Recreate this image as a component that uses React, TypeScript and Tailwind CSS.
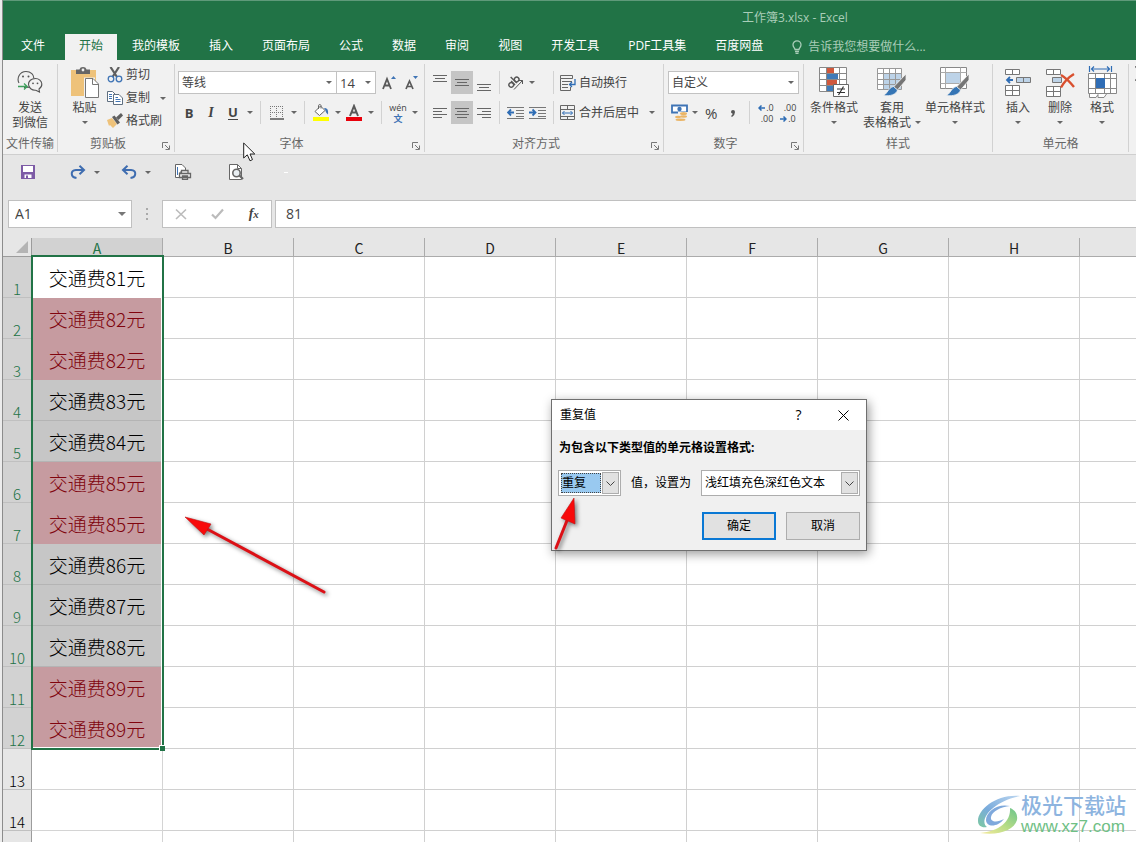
import React, { useState } from "react";

interface ChildrenProps {
  children: React.ReactNode;
}

const tabs = [
  "我的模板",
  "插入",
  "页面布局",
  "公式",
  "数据",
  "审阅",
  "视图",
  "开发工具",
  "PDF工具集",
  "百度网盘",
];

// the last column and row are only partly in view and carry no label
const columns = ["A", "B", "C", "D", "E", "F", "G", "H", ""];

const values = [81, 82, 82, 83, 84, 85, 85, 86, 87, 88, 89, 89];

const rows = Array.from({ length: 15 }, (_, i) => i + 1);

const isDuplicate = (value: number) =>
  values.filter((v) => v === value).length > 1;

const cellStyle = (row: number) => {
  const value = values[row - 1];
  if (value === undefined) return "bg-white";
  if (isDuplicate(value)) return "bg-[#c69ba0] text-[#80040e]";
  return row === 1 ? "bg-white text-black" : "bg-[#c6c6c6] text-black";
};

/* ---------- small parts ---------- */

const Caret = () => (
  <svg width="6" height="3" viewBox="0 0 6 3" className="shrink-0">
    <path d="M0 0H6L3 3Z" fill="#666" />
  </svg>
);

const Divider = () => <div className="mx-[5px] h-[23px] w-px bg-[#d2d2d2]" />;

const CaretButton = ({ label }: { label: string }) => (
  <button aria-label={label} className="flex h-[23px] w-[11px] items-center justify-center">
    <Caret />
  </button>
);

interface ToolProps extends ChildrenProps {
  label: string;
  active?: boolean;
}

const Tool: React.FC<ToolProps> = ({ label, active, children }) => (
  <button
    aria-label={label}
    className={`flex h-[23px] w-[22px] shrink-0 items-center justify-center ${
      active ? "bg-[#c5c5c5]" : ""
    }`}
  >
    {children}
  </button>
);

interface GroupProps extends ChildrenProps {
  title: string;
  width: string;
  launcher?: boolean;
}

const Group: React.FC<GroupProps> = ({ title, width, launcher, children }) => (
  <section className={`flex shrink-0 flex-col border-r border-[#d2d2d2] ${width}`}>
    <div className="h-[72px]">{children}</div>
    <div className="flex h-4 items-center">
      <h2 className="flex-1 text-center leading-4 whitespace-nowrap text-[#666]">{title}</h2>
      {launcher && (
        <button aria-label={`${title}设置`} className="flex w-4 justify-center pt-1">
          <svg width="8" height="8" viewBox="0 0 8 8" fill="none" stroke="#777">
            <path d="M.5 6V.5H6M3 3L7 7M7.5 3.5V7.5H3.5" />
          </svg>
        </button>
      )}
    </div>
  </section>
);

interface BigButtonProps {
  icon: React.ReactNode;
  lines: string[];
  width: string;
  caret?: "below" | "inline";
}

const BigButton: React.FC<BigButtonProps> = ({ icon, lines, width, caret }) => (
  <button
    className={`flex shrink-0 flex-col items-center pt-0.5 leading-[15px] whitespace-nowrap ${width}`}
  >
    <span className="mb-0.5 flex h-8 items-center justify-center">{icon}</span>
    {lines.map((line, i) => (
      <span key={line} className="flex items-center gap-1">
        {line}
        {caret === "inline" && i === lines.length - 1 && <Caret />}
      </span>
    ))}
    {caret === "below" && (
      <span className="flex h-[15px] items-center">
        <Caret />
      </span>
    )}
  </button>
);

/* ---------- icons ---------- */

const WechatIcon = () => (
  <svg width="26" height="24" viewBox="0 0 26 24" fill="none" stroke="#555" strokeWidth="1.1">
    <path d="M2 13C-.5 8.5 2.5 1.5 9 1.5C14 1.5 17 5 16.7 8.3" />
    <path d="M7 17.5L12.5 17.2" />
    <path d="M18.5 8.5C14 8.5 11.5 11.3 11.5 14.3C11.5 18 15 20.5 18.8 20.2L22.5 22L22 19C24.3 17.5 25 15.8 24.8 13.8C24.5 11 22 8.5 18.5 8.5Z" />
    <path d="M1 16.5H10M7 13.5L10.2 16.5L7 19.5" stroke="#3ea05c" strokeWidth="1.3" />
    <circle cx="6" cy="6.5" r="1" fill="#555" stroke="none" />
    <circle cx="11.5" cy="6.5" r="1" fill="#555" stroke="none" />
    <circle cx="16" cy="13.3" r=".9" fill="#555" stroke="none" />
    <circle cx="20.5" cy="13.3" r=".9" fill="#555" stroke="none" />
  </svg>
);

const PasteIcon = () => (
  <svg width="28" height="31" viewBox="0 0 28 31">
    <path d="M0 3H25V29H0Z" fill="#eec27a" />
    <path d="M5 2.5H8.5C9 .8 10 0 12 0S15 .8 15.5 2.5H19V7H5Z" fill="#666" />
    <circle cx="12" cy="3" r="1.4" fill="#f1f1f1" />
    <path d="M13 10.5H24V31H13Z" fill="#f1f1f1" />
    <path d="M14.5 11.5H22L27.5 17V30.5H14.5Z" fill="#fff" stroke="#777" />
    <path d="M21.5 11.5V17.5H27.5" fill="none" stroke="#777" />
  </svg>
);

const CutIcon = () => (
  <svg width="16" height="16" viewBox="0 0 16 16" fill="none">
    <path d="M3.5 0L10 10M12 0L5.5 10" stroke="#5f5f5f" strokeWidth="2.2" />
    <circle cx="4" cy="12" r="2.8" stroke="#3f74b5" strokeWidth="1.3" />
    <circle cx="12" cy="12" r="2.8" stroke="#3f74b5" strokeWidth="1.3" />
  </svg>
);

const CopyIcon = () => (
  <svg width="16" height="16" viewBox="0 0 16 16" fill="#fff" stroke="#5f6f80">
    <path d="M.5 1.5H5.5L8.5 4.500V11.5H.5Z" />
    <path d="M6.5 4.500H12L15.5 8V14.5H6.5Z" />
    <path d="M2 4.500H5M2 6.500H5M2 8.500H5M8.500 7.500H11M8.500 9.500H13.500M8.500 11.500H13.500" stroke="#3f74b5" />
  </svg>
);

const BrushIcon = () => (
  <svg width="16" height="16" viewBox="0 0 16 16">
    <path d="M0 7L5 5L10 11L6 15L3 12L2 13Z" fill="#eec27a" />
    <path d="M5 4L7.5 2.5L13 9.5L10.5 11.5Z" fill="#5f5f5f" />
    <path d="M9 4.500L14 0L16 2.500L11.500 7Z" fill="#5f5f5f" />
  </svg>
);

const BordersIcon = () => (
  <svg width="14" height="14" viewBox="0 0 14 14" fill="none" stroke="#777">
    <path d="M0 .5H14M0 6.5H14M.5 0V12M6.5 0V12M12.500 0V12" strokeDasharray="1 1" />
    <path d="M0 13H14" stroke="#555" strokeWidth="1.5" />
  </svg>
);

const FillIcon = () => (
  <svg width="16" height="17" viewBox="0 0 16 17">
    <path d="M2 7.500L7.500 2L12 6.500L6.500 11.500Z" fill="#fff" stroke="#666" />
    <path d="M5.500 5V1.500C5.500 .3 8 .3 8 1.500V4.500" fill="none" stroke="#666" />
    <path d="M11 4C14.500 4 15.500 6 15 10.500C13.500 9 12.500 8 12.300 6Z" fill="#3f74b5" />
    <path d="M0 13H16V17H0Z" fill="#ff0" />
  </svg>
);

const FontColorIcon = () => (
  <svg width="16" height="17" viewBox="0 0 16 17">
    <path d="M4 12L8 2L12 12M5.500 8.500H10.500" fill="none" stroke="#595959" strokeWidth="2" />
    <path d="M0 13H16V17H0Z" fill="#e8000b" />
  </svg>
);

const alignPaths = {
  top: "M0 .5H14M2 3.500H12M0 6.500H14",
  middle: "M0 4.500H14M2 7.500H12M0 10.500H14",
  bottom: "M0 9.500H14M2 12.500H12M0 15.500H14",
  left: "M0 3.500H14M0 6.500H9M0 9.500H14M0 12.500H9",
  center: "M0 3.500H14M2 6.500H12M0 9.500H14M2 12.500H12",
  right: "M0 3.500H14M5 6.500H14M0 9.500H14M5 12.500H14",
};

const AlignIcon = ({ kind }: { kind: keyof typeof alignPaths }) => (
  <svg width="14" height="16" viewBox="0 0 14 16" fill="none" stroke="#666">
    <path d={alignPaths[kind]} />
  </svg>
);

const OrientationIcon = () => (
  <svg width="17" height="16" viewBox="0 0 17 16" fill="none" stroke="#555">
    <g transform="rotate(-45 6 6)" strokeWidth="1.4">
      <circle cx="2" cy="7.500" r="2.300" />
      <path d="M4.700 4.700V10.200M7.200 1.500V10.200" />
      <circle cx="9.700" cy="7.500" r="2.300" />
    </g>
    <path d="M7 14.500L15.500 5.500M12 5.500H15.500V9" />
  </svg>
);

const IndentIcon = ({ decrease }: { decrease?: boolean }) => (
  <svg width="17" height="14" viewBox="0 0 17 14" fill="none">
    <path d="M0 1.500H17M9 4.500H17M9 7.500H17M9 10.500H17M0 12.500H17" stroke="#777" />
    <path
      d={decrease ? "M7 6.500H1.500M4 3.500L1 6.500L4 9.500" : "M0 6.500H5.500M3.500 3.500L6.500 6.500L3.500 9.500"}
      stroke="#2f6db5"
      strokeWidth="1.8"
    />
  </svg>
);

const WrapIcon = () => (
  <svg width="16" height="16" viewBox="0 0 16 16" fill="none" stroke="#666">
    <path d="M.5 .5H12.500V3.500H.5ZM.5 3.500V15.500H10.500V12M2 6.500H12M2 9.500H8M2 12.500H8" />
    <path d="M15 4V9.500H10M12 7L9.500 9.500L12 12" stroke="#2f6db5" strokeWidth="1.3" />
  </svg>
);

const MergeIcon = () => (
  <svg width="16" height="16" viewBox="0 0 16 16" fill="none" stroke="#666">
    <path d="M.5 .5H14.500V14.500H.5ZM.5 4.500H14.500M.5 11.500H14.500M7.500 .5V4.500M7.500 11.500V14.500" />
    <path d="M2.500 8H12.500M4.500 6L2.500 8L4.500 10M10.500 6L12.500 8L10.500 10" stroke="#2f6db5" />
  </svg>
);

const MoneyIcon = () => (
  <svg width="17" height="17" viewBox="0 0 17 17">
    <path d="M1 1.500H16V8.500H1Z" fill="#fff" stroke="#3f74b5" strokeWidth="1.8" />
    <circle cx="8.500" cy="5" r="2.200" fill="#3f74b5" />
    <path d="M7 8H17V17H4V12H7Z" fill="#f1f1f1" />
    <ellipse cx="12.500" cy="9.500" rx="3.500" ry="1.500" fill="#eab567" />
    <ellipse cx="12.500" cy="12.500" rx="3.500" ry="1.200" fill="#eab567" />
    <ellipse cx="7" cy="13" rx="3" ry="1.200" fill="#eab567" />
    <ellipse cx="9.500" cy="15.700" rx="5" ry="1.200" fill="#eab567" />
  </svg>
);

const DecimalIcon = ({ increase }: { increase?: boolean }) => (
  <span className="relative flex flex-col text-[9px] leading-[11px] text-[#444]">
    <span className={increase ? "pl-2" : "pl-1"}>{increase ? ".0" : ".00"}</span>
    <span className={increase ? "pl-[2px]" : "pl-2"}>{increase ? ".00" : ".0"}</span>
    <svg
      width="7"
      height="6"
      viewBox="0 0 7 6"
      fill="none"
      stroke="#2f6db5"
      strokeWidth="1.5"
      className={increase ? "absolute top-[3px] left-0" : "absolute bottom-0.5 left-0"}
    >
      <path d={increase ? "M7 3H1M3.500 .5L1 3L3.500 5.500" : "M0 3H6M3.500 .5L6 3L3.500 5.500"} />
    </svg>
  </span>
);

const ConditionalIcon = () => (
  <svg width="30" height="30" viewBox="0 0 30 30">
    <path d="M.5 .5H27.500V24.500H.5Z" fill="#fff" />
    <path d="M8 1H15V6H8ZM8 13H18V18H8Z" fill="#d0583c" />
    <path d="M8 7H19V12H8ZM8 19H14V24H8Z" fill="#3f7ab8" />
    <path d="M.5 .5H27.500V24.500H.5ZM7.500 .5V24.500M20.500 .5V24.500M.5 6.500H27.500M.5 12.500H27.500M.5 18.500H27.500" fill="none" stroke="#888" />
    <path d="M14.500 17.500H29.500V29.500H14.500Z" fill="#fff" stroke="#666" />
    <path d="M18 22H26M18 25.500H26M24.500 19.500L19.500 28" fill="none" stroke="#333" strokeWidth="1.2" />
  </svg>
);

const StyleBrush = () => (
  <>
    <path d="M29 7V13L20.500 23L16.500 20Z" fill="#757575" stroke="#f1f1f1" strokeWidth=".8" />
    <path d="M16.500 19.500L20.500 23C19.500 27.500 13 29.500 6.500 28.500C10.500 26.500 11.500 20.500 16.500 19.500Z" fill="#3575b5" stroke="#f1f1f1" strokeWidth=".8" />
  </>
);

const TableFormatIcon = () => (
  <svg width="30" height="30" viewBox="0 0 30 30">
    <path d="M.5 1.500H24.500V22.500H.5Z" fill="#fff" />
    <path d="M7 7H24V22H7Z" fill="#bdd3e8" />
    <path d="M.5 1.500H24.500V22.500H.5ZM6.500 1.500V22.500M12.500 1.500V22.500M18.500 1.500V22.500M.5 6.500H24.500M.5 12.500H24.500M.5 17.500H24.500" fill="none" stroke="#999" />
    <StyleBrush />
  </svg>
);

const CellStyleIcon = () => (
  <svg width="30" height="30" viewBox="0 0 30 30">
    <path d="M.5 .5H26.500V21.500H.5Z" fill="#fff" stroke="#888" />
    <path d="M5.500 .5V21.500M20.500 .5V21.500M.5 5.500H26.500M.5 16.500H26.500" fill="none" stroke="#aaa" />
    <path d="M6 6H20V16H6Z" fill="#bdd3e8" />
    <StyleBrush />
  </svg>
);

const InsertIcon = () => (
  <svg width="27" height="29" viewBox="0 0 27 29" fill="#fff" stroke="#777">
    <path d="M.5 1.500H14.500V6.500H.5ZM7.500 1.500V6.500M.5 17.500H14.500V27.500H.5ZM7.500 17.500V27.500M.5 22.500H14.500" />
    <path d="M11.500 9.500H25.500V14.500H11.500ZM18.500 9.500V14.500" fill="#bdd3e8" />
    <path d="M8 12H2M5 9L2 12L5 15" fill="none" stroke="#2f6db5" strokeWidth="1.8" />
  </svg>
);

const DeleteIcon = () => (
  <svg width="29" height="29" viewBox="0 0 29 29" fill="#fff" stroke="#777">
    <path d="M.5 1.500H14.500V6.500H.5ZM7.500 1.500V6.500M.5 18.500H14.500V28.500H.5ZM7.500 18.500V28.500M.5 23.500H14.500" />
    <path d="M6.500 9.500H15.500V14.500H6.500Z" fill="#bdd3e8" />
    <path d="M15 7C20 10 24 14 28 19M28 6C23 9 18 14 15 19.500" fill="none" stroke="#d9502f" strokeWidth="2.4" />
  </svg>
);

const FormatIcon = () => (
  <svg width="29" height="32" viewBox="0 0 29 32" fill="#fff" stroke="#888">
    <path d="M1.500 0V6M23.500 0V6M3 3H22M6 .5L3.500 3L6 5.500M19 .5L21.500 3L19 5.500" fill="none" stroke="#2f6db5" strokeWidth="1.2" />
    <path d="M.5 7.500H28.500V27.500H.5ZM.5 12.500H28.500M.5 22.500H28.500M7.500 7.500V27.500M16.500 7.500V27.500M22.500 7.500V27.500" />
    <path d="M8 12H17V22H8Z" fill="#2f6db5" stroke="none" />
    <path d="M1.500 28V31.500H8L10 28.500V31.500H16L18.500 28" />
  </svg>
);

const SaveIcon = () => (
  <svg width="14" height="14" viewBox="0 0 14 14">
    <path d="M0 0H14V14H0Z" fill="#7d5ba6" />
    <path d="M2 1H12V7H2ZM3.500 9.500H10.500V13H3.500Z" fill="#fff" />
    <path d="M5 10.500H7V13H5Z" fill="#7d5ba6" />
  </svg>
);

const UndoIcon = ({ redo }: { redo?: boolean }) => (
  <svg width="16" height="14" viewBox="0 0 16 14" fill="none" stroke="#3f6db0" strokeWidth="2">
    {redo ? (
      <path d="M14 5H6C0 5.500 .5 12 6.500 13M9.500 .8L14 5L9.500 9.200" />
    ) : (
      <path d="M2 5H10C16 5.500 15.500 12 9.500 13M6.500 .8L2 5L6.500 9.200" />
    )}
  </svg>
);

const PrintIcon = () => (
  <svg width="17" height="16" viewBox="0 0 17 16" fill="none" stroke="#666">
    <path d="M.5 .5H7L10.500 4V8H5V13.500H.5Z" fill="#fff" />
    <path d="M2.500 3V11" stroke="#3f74b5" />
    <path d="M6.500 9V6.500H13V9M4.500 9.500H15.500V13.500H4.500ZM7.500 12H12.500V15.500H7.500Z" strokeWidth="1.3" fill="#eee" />
  </svg>
);

const PreviewIcon = () => (
  <svg width="15" height="16" viewBox="0 0 15 16" fill="none" stroke="#666">
    <path d="M.5 .5H8.500L12.500 4.500V15.500H.5Z" fill="#fff" />
    <path d="M8.500 .5V4.500H12.500" />
    <circle cx="7.500" cy="9" r="3.700" strokeWidth="1.6" fill="#e8eef2" />
    <path d="M10.500 11.500L14 15" strokeWidth="2.2" />
  </svg>
);

const ChevronBox = () => (
  <span className="pointer-events-none flex w-[17px] items-center justify-center border border-[#adadad] bg-[#e1e1e1]">
    <svg width="9" height="5" viewBox="0 0 9 5" fill="none" stroke="#444">
      <path d="M.5 .5L4.500 4.500L8.500 .5" />
    </svg>
  </span>
);

interface RedArrowProps {
  className: string;
  width: number;
  height: number;
  shaft: string;
  head: string;
}

const RedArrow: React.FC<RedArrowProps> = ({ className, width, height, shaft, head }) => (
  <svg
    width={width}
    height={height}
    viewBox={`0 0 ${width} ${height}`}
    className={`pointer-events-none absolute z-20 overflow-visible drop-shadow-[2px_2px_2px_rgba(0,0,0,0.5)] ${className}`}
  >
    <path d={shaft} stroke="#dc1016" strokeWidth="3" strokeLinecap="round" />
    <path d={head} fill="#f80a0a" stroke="#c01014" strokeWidth=".6" />
  </svg>
);

/* ---------- ribbon ---------- */

interface RibbonSelectProps {
  label: string;
  value: string;
  className: string;
}

const RibbonSelect: React.FC<RibbonSelectProps> = ({ label, value, className }) => (
  <div className={`relative h-[23px] border border-[#c2c2c2] bg-white ${className}`}>
    <select
      aria-label={label}
      defaultValue={value}
      className="block h-full w-full appearance-none bg-transparent pl-[3px] outline-none"
    >
      <option>{value}</option>
    </select>
    <span className="pointer-events-none absolute inset-y-0 right-1 flex items-center">
      <Caret />
    </span>
  </div>
);

const Ribbon = () => (
  <div className="flex overflow-hidden border-b border-[#cfcfcf] bg-[#f1f1f1] pt-1 pb-0.5 text-[#444]">
    <Group title="文件传输" width="w-[55px]">
      <BigButton icon={<WechatIcon />} lines={["发送", "到微信"]} width="w-full" />
    </Group>

    <Group title="剪贴板" width="w-[117px]" launcher>
      <div className="flex">
        <BigButton icon={<PasteIcon />} lines={["粘贴"]} width="w-[49px] pl-1" caret="below" />
        <div className="flex flex-col gap-px">
          <button className="flex h-[22px] items-center gap-[3px]">
            <CutIcon />
            剪切
          </button>
          <div className="flex h-[22px] items-center gap-[7px]">
            <button className="flex items-center gap-[3px]">
              <CopyIcon />
              复制
            </button>
            <CaretButton label="复制选项" />
          </div>
          <button className="flex h-[22px] items-center gap-[3px]">
            <BrushIcon />
            格式刷
          </button>
        </div>
      </div>
    </Group>

    <Group title="字体" width="w-[250px]" launcher>
      <div className="flex flex-col gap-[7px] pt-[7px] pl-[3px]">
        <div className="flex">
          <RibbonSelect label="字体" value="等线" className="w-[159px]" />
          <RibbonSelect label="字号" value="14" className="-ml-px w-10 text-[13px]" />
          <div className="flex pl-0.5">
            <Tool label="增大字号">
              <svg width="14" height="16" viewBox="0 0 14 16" fill="none">
                <path d="M1 14L5 4L9 14M2.500 10.500H7.500" stroke="#595959" strokeWidth="1.8" />
                <path d="M9 4L11.500 1L14 4Z" fill="#3f74b5" />
              </svg>
            </Tool>
            <Tool label="减小字号">
              <svg width="14" height="16" viewBox="0 0 14 16" fill="none">
                <path d="M2 14L5.500 6L9 14M3.500 11.500H7.500" stroke="#595959" strokeWidth="1.7" />
                <path d="M9 1H14L11.500 4Z" fill="#3f74b5" />
              </svg>
            </Tool>
          </div>
        </div>
        <div className="flex items-center">
          <Tool label="加粗">
            <b className="text-[13px]">B</b>
          </Tool>
          <Tool label="倾斜">
            <i className="font-['Liberation_Serif',serif] text-sm font-bold">I</i>
          </Tool>
          <Tool label="下划线">
            <b className="border-b border-[#444] text-[13px] leading-[13px]">U</b>
          </Tool>
          <CaretButton label="下划线选项" />
          <Divider />
          <Tool label="边框">
            <BordersIcon />
          </Tool>
          <CaretButton label="边框选项" />
          <Divider />
          <Tool label="填充颜色">
            <FillIcon />
          </Tool>
          <CaretButton label="填充颜色选项" />
          <Tool label="字体颜色">
            <FontColorIcon />
          </Tool>
          <CaretButton label="字体颜色选项" />
          <Divider />
          <Tool label="拼音">
            <span className="flex flex-col items-center text-[9px] leading-[11px]">
              <span>wén</span>
              <span className="font-bold text-[#3f74b5]">文</span>
            </span>
          </Tool>
          <CaretButton label="拼音选项" />
        </div>
      </div>
    </Group>

    <Group title="对齐方式" width="w-[239px]" launcher>
      <div className="flex flex-col gap-[7px] pt-[7px] pl-1">
        <div className="flex items-center">
          <Tool label="顶端对齐">
            <AlignIcon kind="top" />
          </Tool>
          <Tool label="垂直居中" active>
            <AlignIcon kind="middle" />
          </Tool>
          <Tool label="底端对齐">
            <AlignIcon kind="bottom" />
          </Tool>
          <div className="mx-1 h-[23px] w-px bg-[#d2d2d2]" />
          <div className="flex w-11">
            <Tool label="方向">
              <OrientationIcon />
            </Tool>
            <CaretButton label="方向选项" />
          </div>
          <Divider />
          <button className="flex items-center gap-[3px] pl-px">
            <WrapIcon />
            自动换行
          </button>
        </div>
        <div className="flex items-center">
          <Tool label="左对齐">
            <AlignIcon kind="left" />
          </Tool>
          <Tool label="居中" active>
            <AlignIcon kind="center" />
          </Tool>
          <Tool label="右对齐">
            <AlignIcon kind="right" />
          </Tool>
          <div className="mx-1 h-[23px] w-px bg-[#d2d2d2]" />
          <Tool label="减少缩进量">
            <IndentIcon decrease />
          </Tool>
          <Tool label="增加缩进量">
            <IndentIcon />
          </Tool>
          <Divider />
          <button className="mr-[7px] flex items-center gap-[3px] pl-px whitespace-nowrap">
            <MergeIcon />
            合并后居中
          </button>
          <CaretButton label="合并选项" />
        </div>
      </div>
    </Group>

    <Group title="数字" width="w-[140px]" launcher>
      <div className="flex flex-col gap-[7px] px-1 pt-[7px]">
        <RibbonSelect label="数字格式" value="自定义" className="w-full" />
        <div className="flex items-center">
          <Tool label="会计数字格式">
            <MoneyIcon />
          </Tool>
          <CaretButton label="会计数字格式选项" />
          <Tool label="百分比样式">
            <span className="text-[15px]">%</span>
          </Tool>
          <Tool label="千位分隔样式">
            <svg width="6" height="8" viewBox="0 0 6 8">
              <path d="M1 3A2 2 0 1 1 5 3Q5 6 2 8L1 7Q3 5.500 2.500 4.500Q1 4 1 3Z" fill="#555" />
            </svg>
          </Tool>
          <Divider />
          <Tool label="增加小数位数">
            <DecimalIcon increase />
          </Tool>
          <Tool label="减少小数位数">
            <DecimalIcon />
          </Tool>
        </div>
      </div>
    </Group>

    <Group title="样式" width="w-[189px]">
      <div className="flex px-1">
        <BigButton icon={<ConditionalIcon />} lines={["条件格式"]} width="w-[52px]" caret="below" />
        <BigButton
          icon={<TableFormatIcon />}
          lines={["套用", "表格格式"]}
          width="w-16"
          caret="inline"
        />
        <BigButton icon={<CellStyleIcon />} lines={["单元格样式"]} width="w-[62px]" caret="below" />
      </div>
    </Group>

    <Group title="单元格" width="w-[136px]">
      <div className="flex px-1">
        <BigButton icon={<InsertIcon />} lines={["插入"]} width="w-[42px]" caret="below" />
        <BigButton icon={<DeleteIcon />} lines={["删除"]} width="w-[42px]" caret="below" />
        <BigButton icon={<FormatIcon />} lines={["格式"]} width="w-[42px]" caret="below" />
      </div>
    </Group>

    <button aria-label="自动求和" className="ml-1.5 shrink-0 self-start pt-0.5">
      <svg width="12" height="15" viewBox="0 0 12 15" fill="none" stroke="#555" strokeWidth="1.5">
        <path d="M11 3V1H1L6 7.500L1 14H11V12" />
      </svg>
    </button>
  </div>
);

/* ---------- sheet ---------- */

const Sheet = () => (
  <div className="relative min-h-0 flex-1 overflow-hidden bg-white">
    <table className="w-max table-fixed border-separate border-spacing-0 font-['Noto_Sans_CJK_SC',sans-serif]">
      <thead>
        <tr className="h-[19px] text-sm leading-4">
          <th className="w-[29px] border-r border-b border-[#9c9c9c] bg-[#e6e6e6] p-0">
            <svg width="12" height="12" viewBox="0 0 12 12" className="ml-auto mr-[3px]">
              <path d="M12 0V12H0Z" fill="#b4b4b4" />
            </svg>
          </th>
          {columns.map((column) => (
            <th
              key={column}
              scope="col"
              className={`w-[131px] border-r border-b border-[#ababab] p-0 pt-0.5 font-normal ${
                column === "A" ? "bg-[#d2d2d2] text-[#217346]" : "bg-[#e6e6e6] text-[#222]"
              }`}
            >
              {column}
            </th>
          ))}
        </tr>
      </thead>
      <tbody>
        {rows.map((row) => (
          <tr key={row} className="h-[41px]">
            <th
              scope="row"
              className={`border-r border-b border-r-[#9c9c9c] border-b-[#c0c0c0] p-0 align-bottom text-[15px] leading-4 font-light ${
                row <= values.length ? "bg-[#d2d2d2] text-[#217346]" : "bg-[#e6e6e6] text-black"
              }`}
            >
              {row < rows.length && row}
            </th>
            {columns.map((column) =>
              column === "A" ? (
                <td
                  key={column}
                  className={`border-r border-b p-0 pt-0.5 text-center text-[19px] leading-6 font-light ${cellStyle(row)} ${
                    row > values.length
                      ? "border-[#d4d4d4]"
                      : isDuplicate(values[row - 1])
                        ? "border-[#c69ba0]"
                        : row === 1
                          ? "border-white"
                          : "border-[#b4b4b4]"
                  }`}
                >
                  {row <= values.length && `交通费${values[row - 1]}元`}
                </td>
              ) : (
                <td key={column} className="border-r border-b border-[#d0d0d0] p-0" />
              )
            )}
          </tr>
        ))}
      </tbody>
    </table>
    {/* selection frame around A1:A12 */}
    <div className="pointer-events-none absolute top-[17px] left-7 h-[495px] w-[133px] border-2 border-[#217346]">
      <div className="h-full border-r border-b border-white" />
      <span className="absolute -right-[3px] -bottom-[3px] h-[6px] w-[6px] border-t border-l border-white bg-[#217346]" />
    </div>
  </div>
);

/* ---------- dialog ---------- */

const DuplicateDialog = ({ onClose }: { onClose: () => void }) => (
  <div
    role="dialog"
    aria-labelledby="dialog-title"
    className="absolute top-[399px] left-[551px] z-10 w-[316px] border border-[#6f6f6f] bg-[#f0f0f0] pb-2.5 text-black shadow-[2px_3px_10px_rgba(0,0,0,0.4)]"
  >
    <div className="flex h-[30px] items-center bg-white pl-2">
      <h2 id="dialog-title" className="flex-1">
        重复值
      </h2>
      <button aria-label="帮助" className="w-[45px] text-center text-sm">
        ?
      </button>
      <button aria-label="关闭" onClick={onClose} className="flex w-[45px] justify-center">
        <svg width="11" height="11" viewBox="0 0 11 11" stroke="#000">
          <path d="M.5 .5L10.500 10.500M10.500 .5L.5 10.500" />
        </svg>
      </button>
    </div>
    <p className="px-[7px] pt-2 leading-5 font-bold">为包含以下类型值的单元格设置格式:</p>
    <div className="flex items-center px-[6px] pt-3">
      <div className="flex h-[26px] w-[63px] border border-[#adadad] bg-white p-px">
        <select
          id="kind"
          aria-label="类型"
          defaultValue="重复"
          className="m-px min-w-0 flex-1 appearance-none border border-dotted border-[#444] bg-[#99c9f0] outline-none"
        >
          <option>重复</option>
          <option>唯一</option>
        </select>
        <ChevronBox />
      </div>
      <label htmlFor="format" className="px-2.5 whitespace-nowrap">
        值，设置为
      </label>
      <div className="flex h-[26px] min-w-0 flex-1 border border-[#adadad] bg-white p-px">
        <select
          id="format"
          defaultValue="浅红填充色深红色文本"
          className="min-w-0 flex-1 appearance-none bg-transparent pl-0.5 outline-none"
        >
          <option>浅红填充色深红色文本</option>
        </select>
        <ChevronBox />
      </div>
    </div>
    <div className="flex justify-end gap-2.5 px-[6px] pt-4">
      <button onClick={onClose} className="h-7 w-[74px] border-2 border-[#0a78d4] bg-[#e1e1e1]">
        确定
      </button>
      <button onClick={onClose} className="h-7 w-[74px] border border-[#adadad] bg-[#e1e1e1]">
        取消
      </button>
    </div>
  </div>
);

const Watermark = () => (
  <a
    href="#xz7"
    className="absolute right-2.5 bottom-1.5 z-10 flex items-center gap-px font-['Liberation_Sans','Noto_Sans_CJK_SC',sans-serif]"
  >
    <svg width="43" height="42" viewBox="0 0 43 42">
      <defs>
        <linearGradient id="wave" x1="0" y1="1" x2="1" y2="0">
          <stop offset="0" stopColor="#7cc9a0" />
          <stop offset=".4" stopColor="#79abdc" />
          <stop offset="1" stopColor="#bcd6f0" />
        </linearGradient>
        <linearGradient id="leaf" x1="0" y1="1" x2="1" y2="0">
          <stop offset="0" stopColor="#f6ea9c" />
          <stop offset=".5" stopColor="#b5dc86" />
          <stop offset="1" stopColor="#6cc48c" />
        </linearGradient>
      </defs>
      <path d="M43 2C20 0 1 15 1 27C1 32 5 34 10 33C1 26 16 7 43 2Z" fill="url(#wave)" />
      <path d="M33 12C20 9 9 18 9 26C9 33 20 34 27 25C20 29 13 28 14 23C15 17 24 13 33 12Z" fill="#7fa9dc" />
      <path d="M33 14C38 16 41 20 40 26C37 36 22 42 3 39C22 37 34 28 33 14Z" fill="url(#leaf)" />
    </svg>
    <span className="flex flex-col">
      <span className="text-[21px] leading-[24px] font-medium text-[#8db4df]">极光下载站</span>
      <span className="text-[17px] leading-[18px] text-[#6fc085]">www.xz7.com</span>
    </span>
  </a>
);

export default function App() {
  const [open, setOpen] = useState<boolean>(true);

  return (
    <div className="relative flex h-screen overflow-hidden bg-[#ececec] font-['Open_Sans','Noto_Sans_CJK_SC',sans-serif] text-xs leading-4">
      <div className="w-[3px] shrink-0 border-r border-[#8c8c8c]" />
      <div className="flex min-w-0 flex-1 flex-col bg-[#e6e6e6]">
        <header className="border-t border-[#5f9a7a] bg-[#217346] text-white">
          <h1 className="flex h-[33px] items-center pl-[739px] whitespace-nowrap text-[#a9cdb8]">
            工作簿3.xlsx - Excel
          </h1>
          <nav className="flex h-[26px] items-stretch gap-px whitespace-nowrap">
            <button className="mr-px px-[18px] pb-0.5">文件</button>
            <button className="bg-[#f1f1f1] px-[14px] pb-0.5 text-[#217346]">开始</button>
            {tabs.map((tab) => (
              <button key={tab} className="px-[14px] pb-0.5">
                {tab}
              </button>
            ))}
            <button className="flex items-center gap-1.5 px-[14px] text-[#a9cdb8]">
              <svg width="10" height="14" viewBox="0 0 10 14" fill="none" stroke="#a9cdb8" strokeWidth="1.3">
                <path d="M3 9.500C3 8 1 7.500 1 4.800C1 2.500 2.800 .8 5 .8S9 2.500 9 4.800C9 7.500 7 8 7 9.500ZM3 11.500H7M3.500 13.300H6.500" />
              </svg>
              告诉我您想要做什么...
            </button>
          </nav>
        </header>

        <Ribbon />

        <div className="flex h-[34px] items-center pl-[18px]">
          <button aria-label="保存">
            <SaveIcon />
          </button>
          <button aria-label="恢复" className="ml-[35px]">
            <UndoIcon redo />
          </button>
          <div className="ml-[5px]">
            <CaretButton label="恢复选项" />
          </div>
          <button aria-label="撤消" className="ml-[19px]">
            <UndoIcon />
          </button>
          <div className="ml-[5px]">
            <CaretButton label="撤消选项" />
          </div>
          <button aria-label="快速打印" className="ml-[22px]">
            <PrintIcon />
          </button>
          <button aria-label="打印预览" className="ml-[37px]">
            <PreviewIcon />
          </button>
          <div className="ml-10 h-px w-1 bg-white" />
        </div>

        <div className="mt-[11px] mb-2.5 flex h-7 text-sm text-[#444]">
          <div className="relative ml-[5px] w-[124px] border border-[#c0c0c0] bg-white">
            <select aria-label="名称框" className="h-full w-full appearance-none pl-1.5 outline-none">
              <option>A1</option>
            </select>
            <span className="pointer-events-none absolute inset-y-0 right-[5px] flex items-center">
              <svg width="8" height="4" viewBox="0 0 8 4">
                <path d="M0 0H8L4 4Z" fill="#777" />
              </svg>
            </span>
          </div>
          <div className="flex w-[30px] flex-col items-center justify-center gap-[3px]">
            <span className="h-0.5 w-0.5 bg-[#aaa]" />
            <span className="h-0.5 w-0.5 bg-[#aaa]" />
            <span className="h-0.5 w-0.5 bg-[#aaa]" />
          </div>
          <div className="flex w-[110px] items-center justify-around border border-[#c0c0c0] bg-white">
            <button aria-label="取消输入">
              <svg width="12" height="12" viewBox="0 0 12 12" stroke="#bbb" strokeWidth="1.6">
                <path d="M1 1.500L11 11M11 1.500L1 11" />
              </svg>
            </button>
            <button aria-label="输入">
              <svg width="13" height="12" viewBox="0 0 13 12" fill="none" stroke="#bbb" strokeWidth="2.2">
                <path d="M1 6.500L4.500 10L12 1.500" />
              </svg>
            </button>
            <button
              aria-label="插入函数"
              className="font-['Liberation_Serif',serif] font-bold italic"
            >
              f<span className="text-[11px]">x</span>
            </button>
          </div>
          <input
            aria-label="编辑栏"
            defaultValue="81"
            className="ml-[3px] min-w-0 flex-1 border border-r-0 border-[#c0c0c0] bg-white pl-2.5 outline-none"
          />
        </div>

        <Sheet />
      </div>

      {open && <DuplicateDialog onClose={() => setOpen(false)} />}

      <RedArrow
        className="top-[517px] left-[185px]"
        width={142}
        height={78}
        shaft="M22 12L139 75"
        head="M0 0L26 7L19 18Z"
      />
      <RedArrow
        className="top-[498px] left-[555px]"
        width={22}
        height={52}
        shaft="M1 50L13 20"
        head="M19 0L20 26L6 20Z"
      />

      <svg
        width="13"
        height="20"
        viewBox="0 0 13 20"
        className="pointer-events-none absolute top-[142px] left-[243px] z-20"
      >
        <path d="M.7 1V16L4.300 12.800L7 18.800L9.500 17.600L7 12H11.800Z" fill="#fff" stroke="#222" />
      </svg>

      <Watermark />
    </div>
  );
}
